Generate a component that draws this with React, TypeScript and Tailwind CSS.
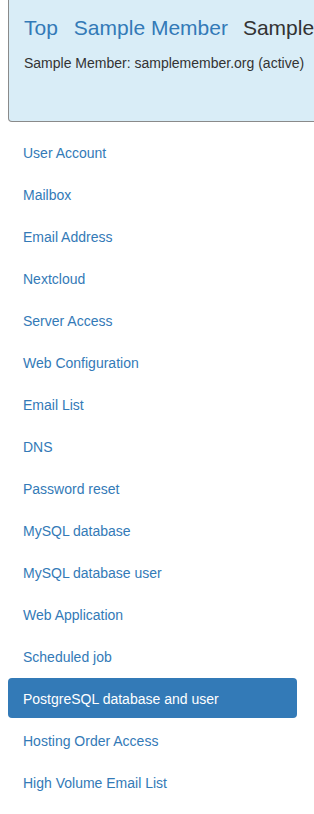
import React from 'react';

const items = [
  'User Account',
  'Mailbox',
  'Email Address',
  'Nextcloud',
  'Server Access',
  'Web Configuration',
  'Email List',
  'DNS',
  'Password reset',
  'MySQL database',
  'MySQL database user',
  'Web Application',
  'Scheduled job',
  'PostgreSQL database and user',
  'Hosting Order Access',
  'High Volume Email List',
];

const active = 'PostgreSQL database and user';

function App() {
  return (
    <div
      className="min-h-screen overflow-hidden bg-white text-[14px] text-[#333]"
      style={{ fontFamily: '"Liberation Sans", Arial, sans-serif' }}
    >
      {/* header panel runs past the right edge */}
      <div className="ml-2 h-[122px] w-[600px] rounded-bl-[4px] border border-t-0 border-[#8a8a8a] bg-[#d9edf7] pl-[15px] pt-[13px]">
        <div className="flex whitespace-nowrap text-[21px] leading-[29px]">
          <a className="text-[#337ab7]">Top</a>
          <a className="ml-[16px] text-[#337ab7]">Sample Member</a>
          <span className="ml-[15px] text-[#333]">Sample Member</span>
        </div>
        <p className="mt-[11px] leading-[20px] whitespace-nowrap">
          Sample Member: samplemember.org (active)
        </p>
      </div>

      <ul className="ml-2 mt-[10px] flex w-[289px] flex-col gap-[2px]">
        {items.map((label) => (
          <li key={label}>
            <a
              className={
                label === active
                  ? 'block rounded-[4px] bg-[#337ab7] pl-[15px] pr-[15px] pt-[11px] pb-[9px] leading-[20px] text-white'
                  : 'block rounded-[4px] pl-[15px] pr-[15px] pt-[11px] pb-[9px] leading-[20px] text-[#337ab7]'
              }
            >
              {label}
            </a>
          </li>
        ))}
      </ul>
    </div>
  );
}

export default App;
